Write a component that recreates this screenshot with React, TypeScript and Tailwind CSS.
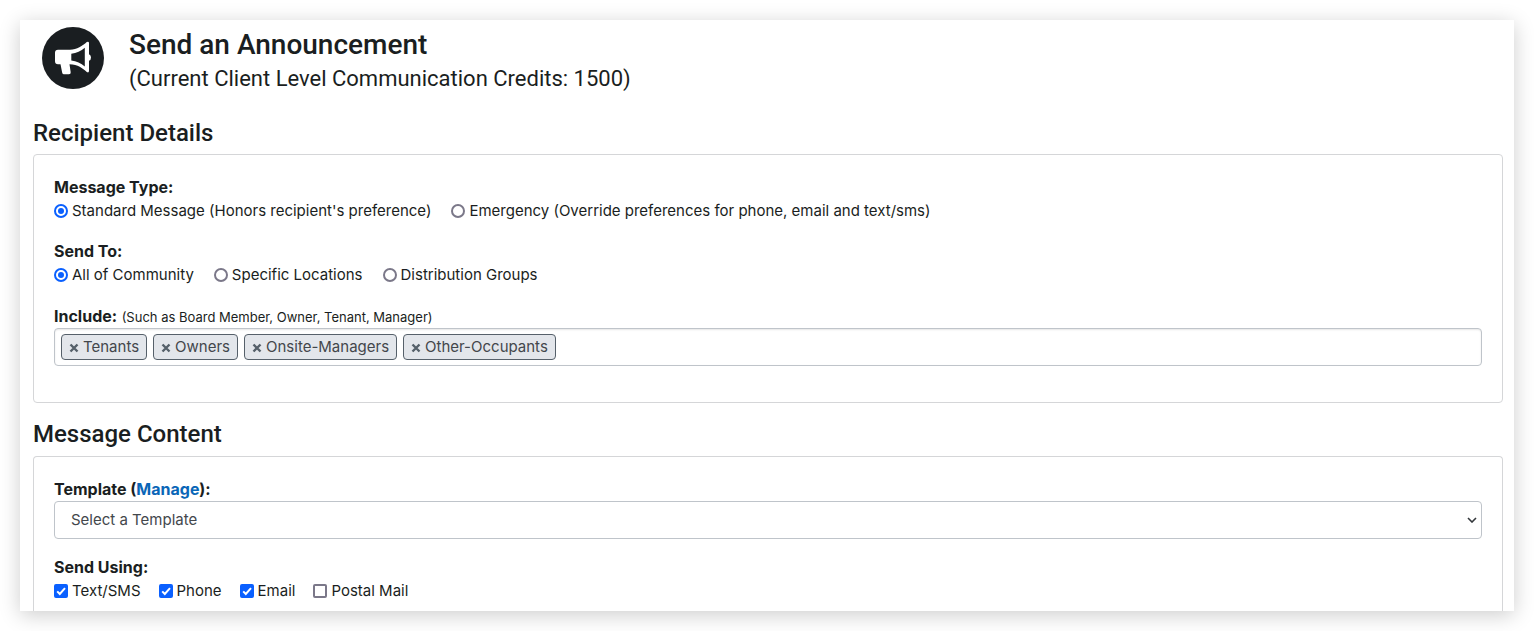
import React from 'react';

interface Choice {
  label: string;
  checked?: boolean;
}

const MESSAGE_TYPES: Choice[] = [
  { label: "Standard Message (Honors recipient's preference)", checked: true },
  { label: 'Emergency (Override preferences for phone, email and text/sms)' },
];

const SEND_TO: Choice[] = [
  { label: 'All of Community', checked: true },
  { label: 'Specific Locations' },
  { label: 'Distribution Groups' },
];

const SEND_USING: Choice[] = [
  { label: 'Text/SMS', checked: true },
  { label: 'Phone', checked: true },
  { label: 'Email', checked: true },
  { label: 'Postal Mail' },
];

const RECIPIENTS = ['Tenants', 'Owners', 'Onsite-Managers', 'Other-Occupants'];

const AnnouncementIcon: React.FC = () => (
  <svg viewBox="0 0 62 62" className="size-[62px] shrink-0" aria-hidden="true">
    <circle cx="31" cy="31" r="31" fill="#1a1e21" />
    <path
      fill="#fff"
      d="M16 22.800H28C35 22.500 40.500 19 44.800 15.100q2-1.200 2.200 1V27.200q2 .8 2 3.300t-2 3.300V44q-.2 2.200-2.200 1C40.500 41 36 37.800 27.500 37.300l1.200 8q.2 2-1.700 2h-5q-1.500 0-1.800-1.500L18.500 37.300H16q-3 0-3-3v-8.500q0-3 3-3z"
    />
    <path fill="#1a1e21" d="M29.300 26.800C34.500 26 39 24 42.800 20.800v18.600c-3.800-3.200-8.300-5.200-13.500-5.900z" />
  </svg>
);

const SectionTitle: React.FC<{ title: string }> = ({ title }) => (
  <h2 className="font-['Roboto','Liberation_Sans',sans-serif] text-2xl leading-7 font-medium">
    {title}
  </h2>
);

const RadioRow: React.FC<{ name: string; options: Choice[] }> = ({ name, options }) => (
  <div className="flex flex-wrap gap-x-5">
    {options.map(({ label, checked }) => (
      <label key={label} className="flex items-center gap-1">
        <input
          type="radio"
          name={name}
          defaultChecked={checked}
          className="size-3.5 shrink-0 appearance-none rounded-full border-2 border-[#7b7889] bg-white checked:border-[#0a60ff] checked:bg-[#0a60ff] checked:bg-clip-content checked:p-0.5"
        />
        {label}
      </label>
    ))}
  </div>
);

const CheckItem: React.FC<Choice> = ({ label, checked }) => (
  <label className="flex items-center gap-1">
    <span className="grid size-3.5 shrink-0">
      <input
        type="checkbox"
        defaultChecked={checked}
        className="peer col-start-1 row-start-1 size-3.5 appearance-none rounded-xs border-2 border-[#7b7889] bg-white checked:border-[#0a60ff] checked:bg-[#0a60ff]"
      />
      <svg
        viewBox="0 0 14 14"
        className="pointer-events-none invisible col-start-1 row-start-1 size-3.5 peer-checked:visible"
        aria-hidden="true"
      >
        <path d="M3.200 7.400 5.800 10 11 4.200" fill="none" stroke="#fff" strokeWidth="2" />
      </svg>
    </span>
    {label}
  </label>
);

const RecipientTag: React.FC<{ name: string }> = ({ name }) => (
  <li className="flex h-[26px] items-center gap-1 rounded border border-[#56606a] bg-[#e3e6eb] px-[7px] text-[#43474c]">
    <button type="button" aria-label={`Remove ${name}`} className="text-[#56606a]">
      <svg viewBox="0 0 10 10" className="mt-0.5 size-2.5" aria-hidden="true">
        <path d="M1.500 1.500l7 7M8.500 1.500l-7 7" stroke="currentColor" strokeWidth="2.400" />
      </svg>
    </button>
    {name}
  </li>
);

export default function App() {
  return (
    <div className="bg-white p-5 font-['Inter','Liberation_Sans',sans-serif] text-[15px] leading-6 text-[#1a1e21]">
      <main className="bg-white pr-[11px] pl-[13px] shadow-[0_4px_20px_rgba(0,0,0,0.2)]">
        <header className="mb-6 flex items-start gap-[25px] pt-[7px] pl-[9px] font-['Roboto','Liberation_Sans',sans-serif]">
          <AnnouncementIcon />
          <div>
            <h1 className="text-[28px] leading-9 font-medium">Send an Announcement</h1>
            <p className="text-[22px] leading-8">(Current Client Level Communication Credits: 1500)</p>
          </div>
        </header>

        <SectionTitle title="Recipient Details" />
        <section className="mt-[7px] mb-[17px] rounded border border-[#d5d6d8] px-5 pt-5 pb-9">
          <p className="text-base font-bold">Message Type:</p>
          <RadioRow name="messageType" options={MESSAGE_TYPES} />

          <p className="mt-4 text-base font-bold">Send To:</p>
          <RadioRow name="sendTo" options={SEND_TO} />

          <p className="mt-[17px] text-base">
            <span className="font-bold">Include:</span>{' '}
            <span className="text-[13px]">(Such as Board Member, Owner, Tenant, Manager)</span>
          </p>
          <ul className="flex flex-wrap gap-1.5 rounded border border-[#bfc4ca] px-1.5 py-[5px] shadow-[inset_0_1px_2px_rgba(0,0,0,0.1)]">
            {RECIPIENTS.map((name) => (
              <RecipientTag key={name} name={name} />
            ))}
          </ul>
        </section>

        <SectionTitle title="Message Content" />
        <section className="mt-2 rounded-t border border-b-0 border-[#d5d6d8] px-5 pt-5 pb-2">
          <div className="text-base font-bold">
            <label htmlFor="template">Template</label> (
            <a href="#templates" className="text-[#0a66b7]">
              Manage
            </a>
            ):
          </div>
          <div className="grid">
            <select
              id="template"
              className="col-start-1 row-start-1 h-[38px] w-full appearance-none rounded border border-[#bfc4ca] bg-white px-4 text-[#43474c]"
            >
              <option>Select a Template</option>
            </select>
            <svg
              viewBox="0 0 10 6"
              className="pointer-events-none col-start-1 row-start-1 mr-[5px] h-1.5 w-2.5 self-center justify-self-end"
              aria-hidden="true"
            >
              <path d="M1 1l4 4 4-4" fill="none" stroke="#33373b" strokeWidth="1.600" />
            </svg>
          </div>

          <p className="mt-4 text-base font-bold">Send Using:</p>
          <div className="flex flex-wrap gap-x-[18px]">
            {SEND_USING.map((item) => (
              <CheckItem key={item.label} {...item} />
            ))}
          </div>
        </section>
      </main>
    </div>
  );
}
